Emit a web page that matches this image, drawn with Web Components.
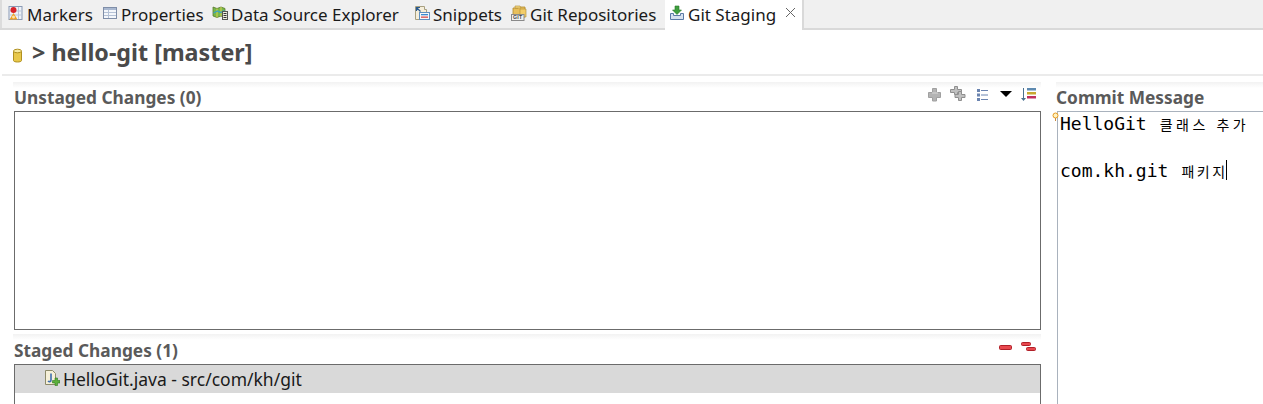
<!DOCTYPE html>
<html>
<head>
<meta charset="utf-8">
<title>Git Staging</title>
<style>
  html, body { margin: 0; padding: 0; background: #fff; overflow: hidden; height: 404px; }
  body { font-family: "Noto Sans", "Noto Sans CJK KR", sans-serif; }
</style>
</head>
<body>
<git-staging-view>
  <view-tabs slot="tabs">
    <view-tab label="Markers" icon="markers" width="96"></view-tab>
    <view-tab label="Properties" icon="properties" width="110"></view-tab>
    <view-tab label="Data Source Explorer" icon="datasource" width="202"></view-tab>
    <view-tab label="Snippets" icon="snippets" width="97"></view-tab>
    <view-tab label="Git Repositories" icon="repos" width="158"></view-tab>
    <view-tab label="Git Staging" icon="staging" width="139" active></view-tab>
  </view-tabs>
</git-staging-view>

<script>
const ICONS = {
  markers: `<rect x="1" y="1.500" width="13" height="13" fill="#eef2f8" stroke="#8a9ab5"/><path d="M10.500 2v12M2 6h12M2 10h12" stroke="#b9c6da"/><circle cx="5.500" cy="5" r="3" fill="#d8232a"/><path d="M5.500 8l4 6.500h-8z" fill="#f0a020"/><circle cx="5.500" cy="12" r="1.500" fill="#fbe3b0"/>`,
  properties: `<rect x="1.500" y="2.500" width="13" height="11" fill="#f4f7fb" stroke="#7f8ea8"/><rect x="2" y="3" width="12" height="2" fill="#a9b8d0"/><path d="M2 7.500h12M2 10.500h12M6.500 5v8" stroke="#b5c2d6"/>`,
  datasource: `<path d="M1 2l4 1.500L9 2l4 1.500v9L9 11l-4 1.500L1 11z" fill="#78b848" stroke="#5a7a30" stroke-width=".8"/><path d="M5 3.500v9M9 2v9" stroke="#d8d050"/><path d="M1.500 8l4-2 3 1.500 4-2" stroke="#38a0c8" fill="none" stroke-width="1.200"/><rect x="10.500" y="6.500" width="5" height="8" fill="#efeee0" stroke="#555"/><path d="M11.500 8.500h3M11.500 10.500h3M11.500 12.500h3" stroke="#333"/>`,
  snippets: `<path d="M1.500 1.500h9v3h2v10h-11z" fill="#f5eeda" stroke="#a8a080"/><path d="M2.500 6V2.500H6M2.500 2.500l4 4" stroke="#2a5a90" stroke-width="1.200" fill="none"/><rect x="5.500" y="7.500" width="10" height="7" fill="#f6f8fb" stroke="#5f8fc0"/><rect x="7" y="9" width="7" height="1.300" fill="#3a8ad0"/><rect x="7" y="11.500" width="7" height="1.300" fill="#d84a4a"/>`,
  repos: `<path d="M2 3h5l1-1h6v10H2z" fill="#e8bf5a" stroke="#b08a30" stroke-width=".8"/><path d="M4 1h5l1 2H4z" fill="#f5d983" stroke="#b08a30" stroke-width=".6"/><path d="M9 4h6v8H9z" fill="#f3cd6a" stroke="#b08a30" stroke-width=".6"/><rect x=".5" y="9.500" width="12.500" height="6" fill="#f0f0f0" stroke="#8a8a8a"/><text x="6.700" y="14.300" text-anchor="middle" font-family="Liberation Sans, sans-serif" font-size="5.200" font-weight="700" letter-spacing=".3" fill="#444">GIT</text>`,
  staging: `<path d="M1.500 8.500h3v2h7v-2h3v6h-13z" fill="#d7e2ef" stroke="#5a7aa5"/><path d="M6 1h4v4h2.500L8 9.500 3.500 5H6z" fill="#3f9f3f" stroke="#2a7a2a" stroke-width=".6"/>`
};

class ViewTabs extends HTMLElement {
  constructor() {
    super();
    this.attachShadow({ mode: "open" });
    this.shadowRoot.innerHTML = `
      <style>
        :host {
          display: flex;
          height: 28px;
          padding-left: 2px;
          background: linear-gradient(90deg, #dcdcdc 2px, #f0f0f0 2px);
          border-bottom: 2px solid #d9d9d9;
        }
      </style>
      <slot></slot>`;
  }
}

class ViewTab extends HTMLElement {
  constructor() {
    super();
    this.attachShadow({ mode: "open" });
  }
  connectedCallback() {
    const active = this.hasAttribute("active");
    this.shadowRoot.innerHTML = `
      <style>
        :host {
          display: flex;
          align-items: center;
          box-sizing: border-box;
          height: 30px;
          padding: 0 0 1px 4px;
          font-size: 17px;
          color: #1a1a1a;
          white-space: nowrap;
          flex: none;
        }
        :host(:first-child) { padding-left: 6px; }
        :host([active]) {
          background: #fff;
          border-right: 2px solid #d9d9d9;
        }
        svg { flex: none; width: 16px; height: 16px; margin: -4px 3px 0 0; }
        .close { margin: -4px 0 0 9px; width: 11px; height: 11px; }
      </style>
      <svg viewBox="0 0 16 16">${ICONS[this.getAttribute("icon")]}</svg>
      <span>${this.getAttribute("label")}</span>
      ${active ? `<svg class="close" viewBox="0 0 11 11"><path d="M1 1l9 9M10 1l-9 9" stroke="#666" fill="none"/></svg>` : ""}`;
    this.style.width = this.getAttribute("width") + "px";
  }
}

class SectionHead extends HTMLElement {
  constructor() {
    super();
    this.attachShadow({ mode: "open" });
    this.shadowRoot.innerHTML = `
      <style>
        :host {
          display: flex;
          align-items: flex-start;
          justify-content: space-between;
          box-sizing: border-box;
          height: 29px;
          padding-top: 5px;
          background: linear-gradient(#f2f2f2 0, #fff 6px);
          font-size: 17.300px;
          font-weight: 700;
          color: #5a5a5a;
          line-height: 22px;
        }
        .tools { display: flex; margin-top: -3px; }
      </style>
      <span><slot></slot></span>
      <div class="tools"><slot name="tools"></slot></div>`;
  }
}

class ChangesList extends HTMLElement {
  constructor() {
    super();
    this.attachShadow({ mode: "open" });
    this.shadowRoot.innerHTML = `
      <style>
        :host {
          display: block;
          box-sizing: border-box;
          margin-left: 1px;
          border: 1px solid #6b6b6b;
          background: #fff;
        }
      </style>
      <slot></slot>`;
  }
}

class FileRow extends HTMLElement {
  constructor() {
    super();
    this.attachShadow({ mode: "open" });
    this.shadowRoot.innerHTML = `
      <style>
        :host {
          display: flex;
          align-items: center;
          height: 28px;
          padding-left: 29px;
          background: #d9d9d9;
          font-size: 17.500px;
          color: #1a1a1a;
          white-space: nowrap;
        }
        svg { width: 16px; height: 16px; margin: -2px 3px 0 0; flex: none; }
      </style>
      <svg viewBox="0 0 16 16">
        <path d="M1.500 .5h7l3 3v11h-10z" fill="#f6f0d8" stroke="#8d8a6a"/>
        <path d="M7 3.500v6.500c0 2-2 2-3 1" stroke="#3d6db0" stroke-width="1.600" fill="none"/>
        <path d="M11 8h2.500v2.500H16V13h-2.500v2.500H11V13H8.500v-2.500H11z" fill="#5cb03c" stroke="#2f7a20" stroke-width=".6"/>
      </svg>
      <slot></slot>`;
  }
}

class GitStagingView extends HTMLElement {
  constructor() {
    super();
    this.attachShadow({ mode: "open" });
    this.shadowRoot.innerHTML = `
      <style>
        :host { display: block; width: 1263px; height: 404px; overflow: hidden; background: #fff; }
        .repo {
          display: flex;
          align-items: center;
          margin-left: 2px;
          padding-left: 10px;
          border-bottom: 2px solid #ebebeb;
          box-sizing: border-box;
          height: 46px;
          font-size: 23.300px;
          font-weight: 700;
          color: #4a4a4a;
        }
        .repo svg { margin: 7px 8px 0 0; flex: none; }
        .body { display: flex; padding-left: 13px; padding-top: 6px; }
        .left { width: 1028px; flex: none; }
        .left section-head { padding-left: 1px; }
        .unstaged { height: 219px; }
        .left .staged-head { margin-top: 4px; height: 30px; padding-top: 6px; }
        .staged { height: 60px; }
        .right { flex: 1; margin-left: 15px; }
        commit-editor { margin-left: 1px; }
        svg.tool { display: block; flex: none; }
      </style>
      <slot name="tabs"></slot>
      <div class="repo">
        <svg width="12" height="15" viewBox="0 0 12 15"><path d="M1.500 3.500v9c0 2 8 2 8 0v-9z" fill="#e8c84a" stroke="#b09020"/><ellipse cx="5.500" cy="3" rx="4" ry="1.800" fill="#f6e9a0" stroke="#b09020"/></svg>
        <span>&gt; hello-git [master]</span>
      </div>
      <div class="body">
        <div class="left">
          <section-head>Unstaged Changes (0)
            <svg slot="tools" class="tool" width="115" height="22" viewBox="0 0 115 22">
              <path d="M6.500 4.500h4v4h4v5h-4v3.500h-4v-3.500h-4v-5h4z" fill="#b4b4b4" stroke="#a0a0a0"/>
              <path d="M6 9h6" stroke="#d8d8d8"/>
              <path d="M28.500 2.500h3v3h4v3h-4v2h-3v-2h-4v-3h4z" fill="#c0c0c0" stroke="#8f8f8f"/>
              <path d="M32.500 7.500h3v3h3.500v3h-3.500v3h-3v-3h-3.500v-3h3.500z" fill="#c0c0c0" stroke="#8f8f8f"/>
              <path d="M51 5h3v3h-3zM51 9.500h3v3h-3zM51 14h3v3h-3z" fill="#6b84b0"/>
              <path d="M55 6.500h7M55 11h7M55 15.500h7" stroke="#6b84b0" stroke-width="1"/>
              <path d="M74 7h12l-6 6z" fill="#000"/>
              <path d="M97.500 4v12" stroke="#4a7090" stroke-width="1"/><path d="M95 14h5l-2.500 3z" fill="#4a7090"/>
              <rect x="101" y="4" width="9" height="2.500" fill="#5e8ab0"/><rect x="101" y="8" width="9" height="2.500" fill="#c9a830"/><rect x="101" y="12" width="9" height="2.500" fill="#c03060"/>
            </svg>
          </section-head>
          <changes-list class="unstaged"></changes-list>
          <section-head class="staged-head">Staged Changes (1)
            <svg slot="tools" class="tool" width="56" height="22" viewBox="0 0 56 22">
              <rect x="14.500" y="8.500" width="12" height="4" rx="1" fill="#e8484e" stroke="#b02028"/>
              <rect x="36.500" y="5.500" width="9" height="3" rx="1" fill="#e8484e" stroke="#b02028"/>
              <rect x="41.500" y="10.500" width="9" height="3" rx="1" fill="#e8484e" stroke="#b02028"/>
            </svg>
          </section-head>
          <changes-list class="staged"><file-row>HelloGit.java - src/com/kh/git</file-row></changes-list>
        </div>
        <div class="right">
          <section-head>Commit Message</section-head>
          <commit-editor></commit-editor>
        </div>
      </div>`;
  }
}

class CommitEditor extends HTMLElement {
  constructor() {
    super();
    this.attachShadow({ mode: "open" });
    this.shadowRoot.innerHTML = `
      <style>
        :host {
          display: block;
          position: relative;
          height: 300px;
          border-left: 1px solid #a9b2bd;
          border-top: 1px solid #a9b2bd;
          padding: 0 0 0 2px;
          font-family: "DejaVu Sans Mono", monospace;
          font-size: 18px;
          color: #000;
        }
        .line { height: 23.500px; line-height: 23.500px; white-space: pre; }
        .ko { font-family: "Noto Sans CJK KR", sans-serif; font-size: 14px; letter-spacing: 2.500px; margin-left: 13px; }
        .title { letter-spacing: 3.500px; word-spacing: 1px; }
        .caret { display: inline-block; width: 1px; height: 20px; background: #000; vertical-align: -3px; margin-left: -2px; }
        .hint { position: absolute; left: -6px; top: 0; }
      </style>
      <svg class="hint" width="7" height="10" viewBox="0 0 7 10"><circle cx="3.500" cy="3.500" r="2.500" fill="#fff2c0" stroke="#e89a20"/><path d="M3.500 6v3" stroke="#c88a40"/></svg>
      <div class="line">HelloGit<span class="ko title">클래스 추가</span></div>
      <div class="line"></div>
      <div class="line">com.kh.git<span class="ko">패키지</span><span class="caret"></span></div>`;
  }
}

customElements.define("view-tabs", ViewTabs);
customElements.define("view-tab", ViewTab);
customElements.define("section-head", SectionHead);
customElements.define("changes-list", ChangesList);
customElements.define("file-row", FileRow);
customElements.define("commit-editor", CommitEditor);
customElements.define("git-staging-view", GitStagingView);
</script>
</body>
</html>
